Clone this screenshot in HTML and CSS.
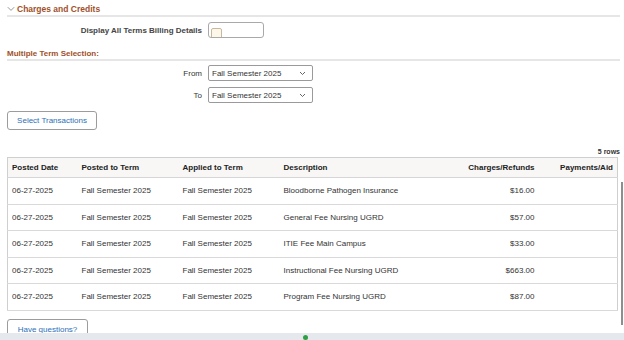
FILE: index.html
```html
<!DOCTYPE html>
<html>
<head>
<meta charset="utf-8">
<link rel="stylesheet" href="styles.css">
</head>
<body>
<div class="page">
  <div class="content">
    <div class="sec-head first">
      <svg class="chev" width="8" height="6" viewBox="0 0 8 6"><path d="M0.8 1.2 L4 4.4 L7.2 1.2" fill="none" stroke="#8a8a8a" stroke-width="0.9"/></svg>
      <span>Charges and Credits</span>
    </div>
    <div class="form-row display-row">
      <div class="label">Display All Terms Billing Details</div>
      <div class="chkbox"><span class="chk"></span></div>
    </div>
    <div class="sec-head sub"><span>Multiple Term Selection:</span></div>
    <div class="form-row from-row">
      <div class="label">From</div>
      <div class="select"><span>Fall Semester 2025</span>
        <svg width="7" height="5" viewBox="0 0 7 5"><path d="M1 1 L3.5 3.5 L6 1" fill="none" stroke="#555" stroke-width="0.9"/></svg>
      </div>
    </div>
    <div class="form-row to-row">
      <div class="label">To</div>
      <div class="select"><span>Fall Semester 2025</span>
        <svg width="7" height="5" viewBox="0 0 7 5"><path d="M1 1 L3.5 3.5 L6 1" fill="none" stroke="#555" stroke-width="0.9"/></svg>
      </div>
    </div>
    <div class="btn select-btn">Select Transactions</div>
    <div class="rowcount">5 rows</div>
    <table class="grid">
      <colgroup>
        <col class="c1"><col class="c2"><col class="c3"><col class="c4"><col class="c5"><col class="c6">
      </colgroup>
      <thead>
        <tr><th>Posted Date</th><th>Posted to Term</th><th>Applied to Term</th><th>Description</th><th class="num">Charges/Refunds</th><th class="num">Payments/Aid</th></tr>
      </thead>
      <tbody>
        <tr><td>06-27-2025</td><td>Fall Semester 2025</td><td>Fall Semester 2025</td><td>Bloodborne Pathogen Insurance</td><td class="num">$16.00</td><td class="num"></td></tr>
        <tr><td>06-27-2025</td><td>Fall Semester 2025</td><td>Fall Semester 2025</td><td>General Fee Nursing UGRD</td><td class="num">$57.00</td><td class="num"></td></tr>
        <tr><td>06-27-2025</td><td>Fall Semester 2025</td><td>Fall Semester 2025</td><td>ITIE Fee Main Campus</td><td class="num">$33.00</td><td class="num"></td></tr>
        <tr><td>06-27-2025</td><td>Fall Semester 2025</td><td>Fall Semester 2025</td><td>Instructional Fee Nursing UGRD</td><td class="num">$663.00</td><td class="num"></td></tr>
        <tr><td>06-27-2025</td><td>Fall Semester 2025</td><td>Fall Semester 2025</td><td>Program Fee Nursing UGRD</td><td class="num">$87.00</td><td class="num"></td></tr>
      </tbody>
    </table>
    <div class="btn q-btn">Have questions?</div>
  </div>
  <div class="scrollbar"></div>
  <div class="taskbar"><span class="dot"></span></div>
</div>
</body>
</html>
```
FILE: styles.css
```css
html, body {
  margin: 0;
  padding: 0;
  background: #fff;
}
.page {
  position: relative;
  width: 624px;
  height: 340px;
  overflow: hidden;
  font-family: "Liberation Sans", Arial, sans-serif;
  font-size: 8px;
  color: #333;
}
.content {
  padding: 2px 4px 0 7px;
}
.sec-head {
  display: flex;
  align-items: center;
  height: 13px;
  border-bottom: 2px solid #e6e6e6;
  color: #a0502a;
  font-weight: bold;
  font-size: 8.5px;
}
.chev {
  margin-right: 2px;
}
.sec-head.sub {
  margin-top: 9px;
  height: 12px;
  font-size: 8px;
}
.form-row {
  display: grid;
  grid-template-columns: 195px auto;
  column-gap: 6px;
  align-items: center;
}
.label {
  text-align: right;
  font-weight: bold;
  color: #444;
  font-size: 8px;
}
.from-row .label, .to-row .label {
  font-weight: normal;
  color: #333;
}
.display-row {
  margin-top: 5px;
}
.chkbox {
  width: 52px;
  height: 14px;
  border: 1px solid #a9a9a9;
  border-radius: 3px;
  overflow: hidden;
  display: flex;
  align-items: flex-start;
  padding-left: 2px;
}
.chk {
  display: block;
  width: 9px;
  height: 9px;
  margin-top: 5px;
  border: 1px solid #c7b9a0;
  border-radius: 2px;
  background: #fdf7ea;
}
.from-row {
  margin-top: 4px;
}
.to-row {
  margin-top: 6px;
}
.select {
  height: 14px;
  border: 1px solid #9a9a9a;
  border-radius: 2px;
  display: flex;
  align-items: center;
  justify-content: space-between;
  padding: 0 6px 0 3px;
  box-sizing: content-box;
  width: 94px;
  color: #333;
}
.btn {
  display: inline-flex;
  align-items: center;
  justify-content: center;
  border: 1px solid #9c9c9c;
  border-radius: 3px;
  color: #2d6fb7;
  background: #fff;
}
.select-btn {
  margin-top: 8px;
  width: 88px;
  height: 17px;
}
.rowcount {
  margin-top: 17px;
  text-align: right;
  font-weight: bold;
  font-size: 7px;
  color: #333;
  height: 9px;
  line-height: 9px;
}
.grid {
  margin-top: 1px;
  width: 610px;
  border-collapse: collapse;
  table-layout: fixed;
  border: 1px solid #cfcfcf;
}
.c1 { width: 70px; }
.c2 { width: 101px; }
.c3 { width: 101px; }
.c4 { width: 170px; }
.c5 { width: 89px; }
.c6 { width: 79px; }
.grid th {
  background: #f8f7f5;
  height: 19px;
  padding: 0 4px;
  text-align: left;
  font-weight: bold;
  color: #222;
  border-bottom: 1px solid #d6d6d6;
}
.grid td {
  height: 25.5px;
  padding: 0 4px;
  border-bottom: 1px solid #d9d9d9;
  color: #333;
  white-space: nowrap;
}
.grid .num {
  text-align: right;
}
.q-btn {
  margin-top: 8px;
  width: 79px;
  height: 19px;
}
.scrollbar {
  position: absolute;
  left: 621px;
  top: 182px;
  width: 2px;
  height: 143px;
  background: #8e8e8e;
}
.taskbar {
  position: absolute;
  left: 0;
  right: 0;
  bottom: 0;
  height: 7px;
  background: #e5e8ed;
}
.dot {
  position: absolute;
  left: 303px;
  top: 2px;
  width: 5px;
  height: 5px;
  border-radius: 50%;
  background: #2ea043;
}
```
